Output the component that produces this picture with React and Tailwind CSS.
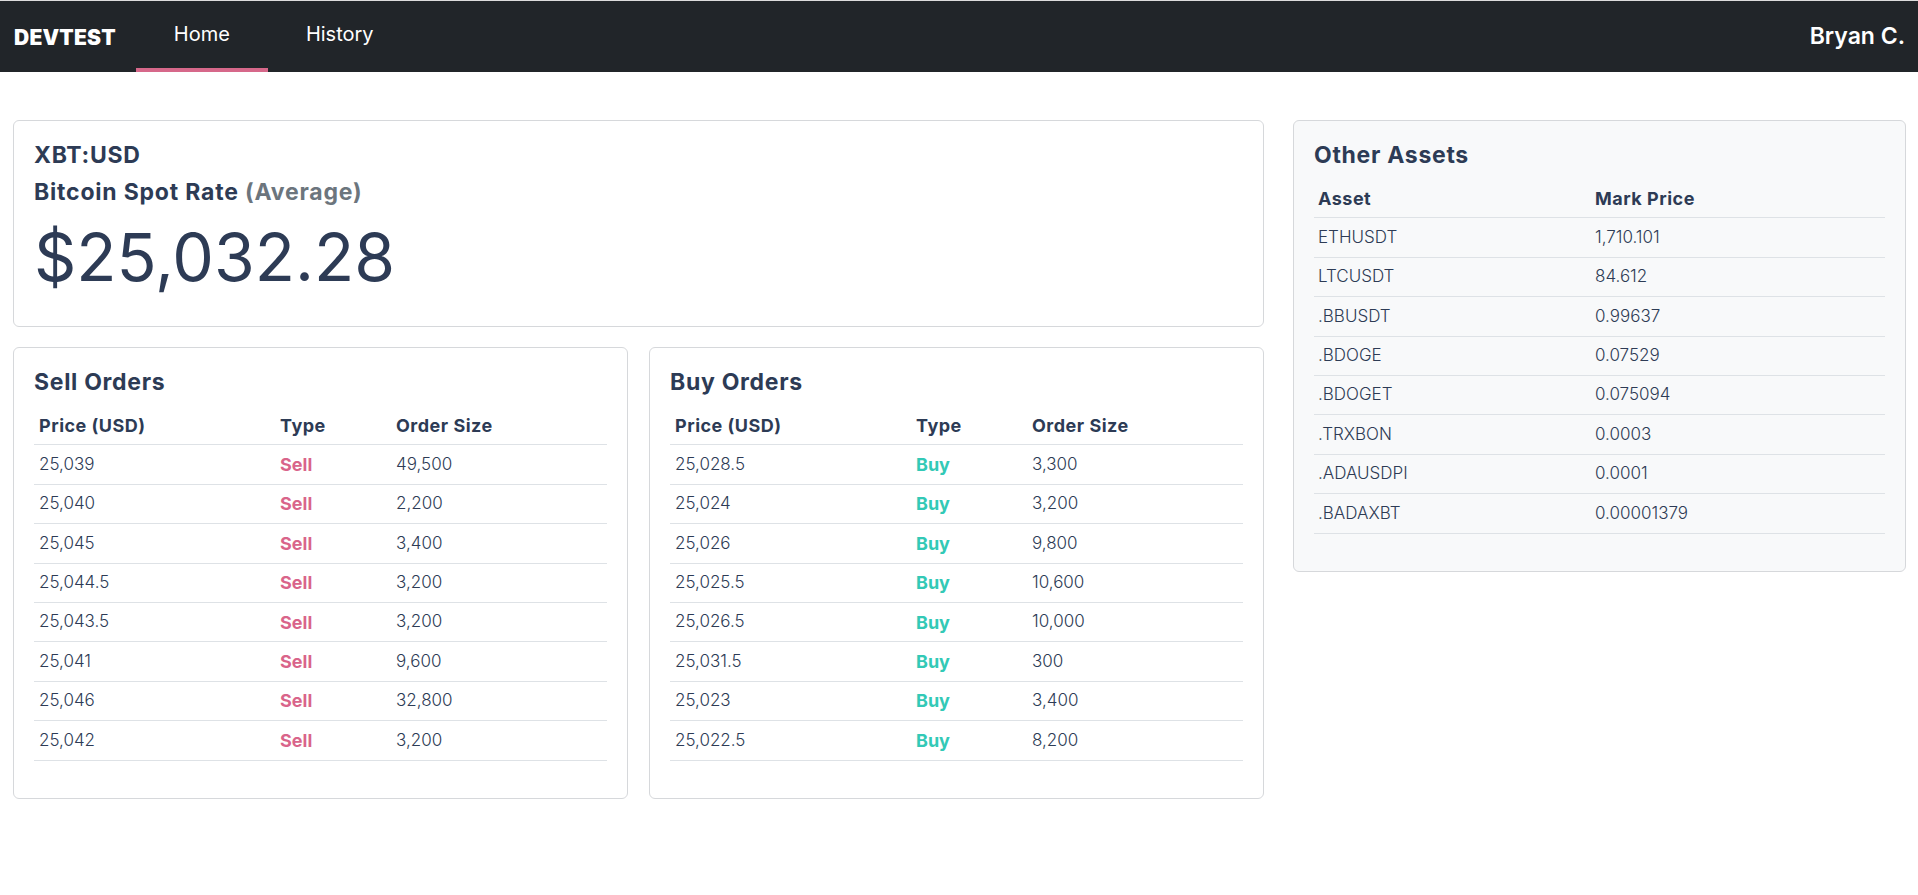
import React from 'react';

const sells = [
  ['25,039', '49,500'],
  ['25,040', '2,200'],
  ['25,045', '3,400'],
  ['25,044.5', '3,200'],
  ['25,043.5', '3,200'],
  ['25,041', '9,600'],
  ['25,046', '32,800'],
  ['25,042', '3,200'],
];

const buys = [
  ['25,028.5', '3,300'],
  ['25,024', '3,200'],
  ['25,026', '9,800'],
  ['25,025.5', '10,600'],
  ['25,026.5', '10,000'],
  ['25,031.5', '300'],
  ['25,023', '3,400'],
  ['25,022.5', '8,200'],
];

const assets = [
  ['ETHUSDT', '1,710.101'],
  ['LTCUSDT', '84.612'],
  ['.BBUSDT', '0.99637'],
  ['.BDOGE', '0.07529'],
  ['.BDOGET', '0.075094'],
  ['.TRXBON', '0.0003'],
  ['.ADAUSDPI', '0.0001'],
  ['.BADAXBT', '0.00001379'],
];

function OrdersCard({ title, rows, kind }) {
  const typeColor = kind === 'Sell' ? 'text-[#d9648a]' : 'text-[#33c9b6]';
  return (
    <div className="flex-1 rounded-md border border-[#d6d8db] bg-white px-5 pt-5 pb-[37px]">
      <h4 className="mb-[10px] text-[23px] font-bold leading-[28px] tracking-[0.7px]">{title}</h4>
      <div className="text-[17px]">
        <div className="grid h-[39.4px] grid-cols-[241px_116px_1fr] items-center border-b border-[#dee2e6] pl-[5px] text-[18px] font-bold tracking-[0.5px]">
          <span>Price (USD)</span>
          <span>Type</span>
          <span>Order Size</span>
        </div>
        {rows.map(([price, size], i) => (
          <div key={i} className="grid h-[39.4px] grid-cols-[241px_116px_1fr] items-center border-b border-[#dee2e6] pl-[5px] font-light">
            <span>{price}</span>
            <span className={`text-[18px] font-bold ${typeColor}`}>{kind}</span>
            <span>{size}</span>
          </div>
        ))}
      </div>
    </div>
  );
}

export default function App() {
  return (
    <div className="min-h-screen bg-white text-[#2d3b55]" style={{ fontFamily: 'Inter, "Noto Sans", sans-serif' }}>
      {/* Navbar */}
      <div className="h-px bg-[#dcdcdc]" />
      <nav className="flex h-[71px] items-stretch bg-[#212529] pl-[14px] pr-[13px] text-white">
        <div className="flex items-center pt-[2px] text-[21px] font-black tracking-[0.2px]">DEVTEST</div>
        <div className="ml-5 flex items-stretch">
          <a className="flex items-center border-b-4 border-[#d6688a] px-[38px] pb-[1px] text-[20px]">Home</a>
          <a className="flex items-center border-b-4 border-transparent px-[38px] pb-[1px] text-[20px]">History</a>
        </div>
        <div className="ml-auto flex items-center text-[23px] font-semibold">Bryan C.</div>
      </nav>

      {/* Content */}
      <div className="flex gap-[29px] pl-[13px] pr-[12px] pt-[48px]">
        <div className="flex w-[1251px] flex-col gap-5">
          <div className="rounded-md border border-[#d6d8db] bg-white px-5 pt-5 pb-[26px]">
            <h4 className="text-[23px] font-bold leading-[28px] tracking-[0.7px]">XBT:USD</h4>
            <h5 className="mt-[9px] text-[23px] font-bold leading-[28px] tracking-[0.8px]">
              Bitcoin Spot Rate <span className="text-[#6c757d]">(Average)</span>
            </h5>
            <div className="mt-[8px] text-[66px] font-normal leading-[86px]">$25,032.28</div>
          </div>
          <div className="flex gap-[21px]">
            <OrdersCard title="Sell Orders" rows={sells} kind="Sell" />
            <OrdersCard title="Buy Orders" rows={buys} kind="Buy" />
          </div>
        </div>

        <div className="flex-1 self-start rounded-md border border-[#d6d8db] bg-[#f8f9fa] px-5 pt-5 pb-[37px]">
          <h4 className="mb-[10px] text-[23px] font-bold leading-[28px] tracking-[0.7px]">Other Assets</h4>
          <div className="text-[17px]">
            <div className="grid h-[39.4px] grid-cols-[277px_1fr] items-center border-b border-[#dee2e6] pl-1 text-[18px] font-bold tracking-[0.5px]">
              <span>Asset</span>
              <span>Mark Price</span>
            </div>
            {assets.map(([name, price]) => (
              <div key={name} className="grid h-[39.4px] grid-cols-[277px_1fr] items-center border-b border-[#dee2e6] pl-1 font-light">
                <span>{name}</span>
                <span>{price}</span>
              </div>
            ))}
          </div>
        </div>
      </div>
    </div>
  );
}
